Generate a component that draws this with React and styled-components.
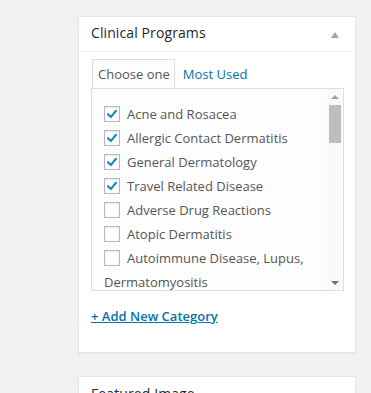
import React from "react";
import styled, { createGlobalStyle } from "styled-components";

const Global = createGlobalStyle`
  html, body { margin: 0; padding: 0; background: #f1f1f1; }
  body { font-family: "Open Sans", "Noto Sans", sans-serif; font-size: 13px; color: #444; }
  * { box-sizing: border-box; }
`;

const Page = styled.div`
  width: 371px;
  height: 393px;
  overflow: hidden;
  padding: 16px 15px 0 78px;
  display: flex;
  flex-direction: column;
  gap: 23px;
`;

const Postbox = styled.div`
  background: #fff;
  border: 1px solid #e5e5e5;
  box-shadow: 0 1px 1px rgba(0, 0, 0, 0.04);
  flex-shrink: 0;
`;

const Header = styled.div`
  height: 35px;
  display: flex;
  align-items: center;
  justify-content: space-between;
  padding: 0 12px 2px 12px;
  border-bottom: ${(p) => (p.$open ? "1px solid #eee" : "none")};
`;

const Title = styled.h2`
  margin: 0;
  font-size: 14px;
  font-weight: 400;
  color: #23282d;
  line-height: 1;
  letter-spacing: 0.1px;
`;

const Toggle = styled.span`
  width: 0;
  height: 0;
  border-left: 4.5px solid transparent;
  border-right: 4.5px solid transparent;
  border-bottom: 6px solid #a0a5aa;
  margin-right: 4px;
  margin-top: 4px;
`;

const Inside = styled.div`
  padding: 7px 12px 0 12px;
  height: 300px;
`;

const Tabs = styled.ul`
  list-style: none;
  margin: 0;
  padding: 0 0 0 1px;
  display: flex;
  height: 29px;
`;

const Tab = styled.li`
  display: flex;
  align-items: center;
  height: 29px;
  margin-bottom: -1px;
  border: 1px solid ${(p) => (p.$active ? "#ddd" : "transparent")};
  border-bottom: none;
  background: ${(p) => (p.$active ? "#fdfdfd" : "transparent")};
  color: ${(p) => (p.$active ? "#555" : "#0073aa")};
  font-size: 13px;
  position: relative;
  z-index: 1;
  padding: 0 4px 0 ${(p) => (p.$active ? "5px" : "7px")};
`;

const Panel = styled.div`
  border: 1px solid #ddd;
  background: #fdfdfd;
  height: 203px;
  display: flex;
  width: 253px;
`;

const List = styled.ul`
  list-style: none;
  margin: 0;
  padding: 13px 8px 0 12px;
  flex: 1;
  overflow: hidden;
`;

const Item = styled.li`
  line-height: 24px;
  color: #555;
  font-size: 13px;
  white-space: normal;
`;

const Box = styled.span`
  display: inline-block;
  vertical-align: middle;
  width: 16px;
  height: 16px;
  border: 1px solid #b4b9be;
  background: #fff;
  box-shadow: inset 0 1px 2px rgba(0, 0, 0, 0.1);
  margin: -3px 7px 0 0;
  position: relative;
`;

const Check = styled.svg`
  position: absolute;
  left: 0;
  top: 0;
  width: 14px;
  height: 14px;
`;

const Scroll = styled.div`
  width: 15px;
  display: flex;
  flex-direction: column;
  align-items: center;
  background: #f9f9f9;
  margin-right: 1px;
`;

const Arrow = styled.div`
  height: 15px;
  width: 15px;
  display: flex;
  align-items: center;
  justify-content: center;
  flex-shrink: 0;
`;

const Tri = styled.span`
  width: 0;
  height: 0;
  border-left: 4px solid transparent;
  border-right: 4px solid transparent;
  ${(p) => (p.$down ? "border-top: 4px solid #707070;" : "border-bottom: 4px solid #a3a3a3;")}
`;

const Track = styled.div`
  flex: 1;
  width: 100%;
  display: flex;
  justify-content: center;
  padding-top: 1px;
`;

const Thumb = styled.div`
  width: 12px;
  height: 38px;
  background: #bdbdbd;
`;

const AddLink = styled.a`
  display: inline-block;
  margin-top: 16px;
  color: #0073aa;
  font-weight: 600;
  font-size: 13px;
  text-decoration: underline;
  line-height: 18px;
`;

const items = [
  ["Acne and Rosacea", true],
  ["Allergic Contact Dermatitis", true],
  ["General Dermatology", true],
  ["Travel Related Disease", true],
  ["Adverse Drug Reactions", false],
  ["Atopic Dermatitis", false],
  ["Autoimmune Disease, Lupus, Dermatomyositis", false],
];

export default function App() {
  return (
    <>
      <Global />
      <Page>
        <Postbox>
          <Header $open>
            <Title>Clinical Programs</Title>
            <Toggle />
          </Header>
          <Inside>
            <Tabs>
              <Tab $active>Choose one</Tab>
              <Tab>Most Used</Tab>
            </Tabs>
            <Panel>
              <List>
                {items.map(([label, checked]) => (
                  <Item key={label}>
                    <Box>
                      {checked && (
                        <Check viewBox="0 0 14 14">
                          <path d="M3 7.2 L5.8 10 L11 3.8" fill="none" stroke="#1e8cbe" strokeWidth="2.2" strokeLinecap="round" strokeLinejoin="round" />
                        </Check>
                      )}
                    </Box>
                    {label}
                  </Item>
                ))}
              </List>
              <Scroll>
                <Arrow><Tri /></Arrow>
                <Track><Thumb /></Track>
                <Arrow><Tri $down /></Arrow>
              </Scroll>
            </Panel>
            <AddLink href="#">+ Add New Category</AddLink>
          </Inside>
        </Postbox>
        <Postbox>
          <Header>
            <Title>Featured Image</Title>
            <Toggle />
          </Header>
        </Postbox>
      </Page>
    </>
  );
}
